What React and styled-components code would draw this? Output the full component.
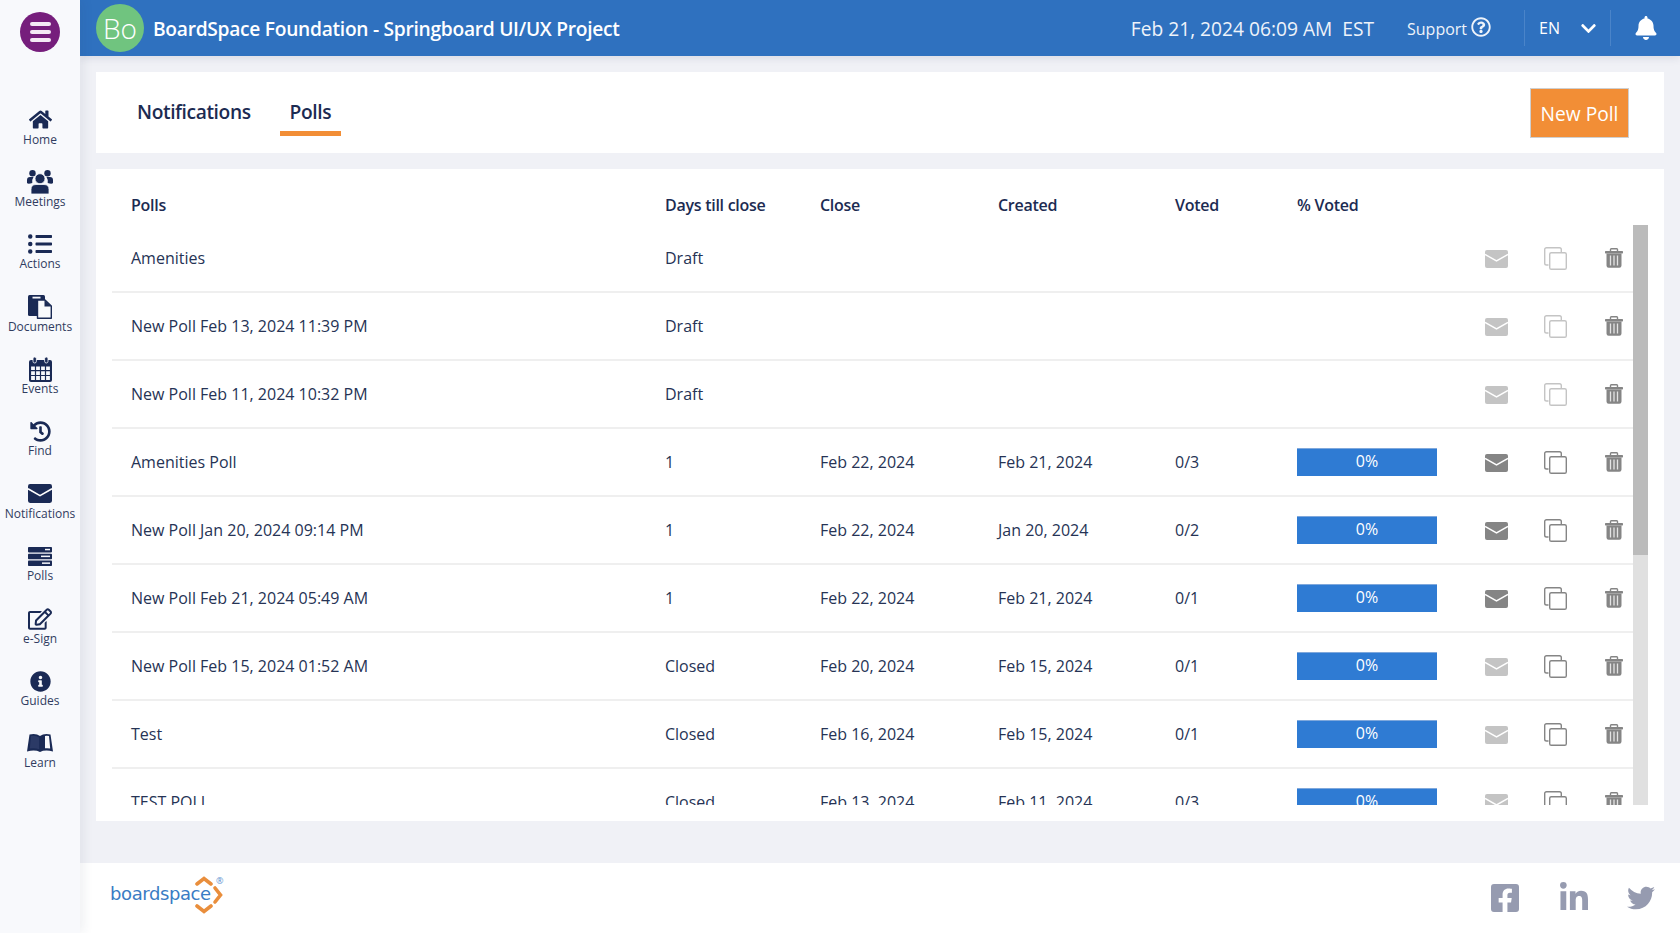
import React from "react";
import styled, { createGlobalStyle } from "styled-components";
import {
  FaHome, FaListUl, FaHistory, FaRegEdit, FaInfoCircle,
  FaBell, FaChevronDown, FaRegQuestionCircle, FaFacebookSquare, FaLinkedinIn, FaTwitter,
} from "react-icons/fa";

const Global = createGlobalStyle`
  html, body { margin: 0; padding: 0; height: 100%; overflow: hidden; }
  body { font-family: "Open Sans", "Noto Sans", sans-serif; color: #1c2b52; }
  * { box-sizing: border-box; }
`;

const Shell = styled.div`display: flex; width: 100%; height: 100vh; background: #f0f1f6;`;
const Sidebar = styled.nav`
  width: 80px; flex: none; background: #f8f9fc; position: relative; z-index: 2;
  box-shadow: 4px 0 10px rgba(40, 50, 90, 0.07);
  display: flex; flex-direction: column; align-items: center; padding-top: 12px;
`;
const MenuButton = styled.button`
  width: 40px; height: 40px; border-radius: 50%; border: 0; padding: 0; margin-bottom: 55.5px;
  background: #761e7c; display: flex; flex-direction: column; justify-content: center; align-items: center; gap: 4px;
`;
const MenuBar = styled.span`width: 21px; height: 4px; border-radius: 2px; background: #f4e9f5;`;
const NavItem = styled.a`
  height: 62.4px; width: 80px; flex: none; display: flex; flex-direction: column; align-items: center;
  font-size: 12px; line-height: 16px; color: #303c60;
`;
const NavIcon = styled.span`
  height: 24px; display: flex; align-items: center; justify-content: center; color: #1a2a55;
`;

const Main = styled.div`flex: 1; min-width: 0; display: flex; flex-direction: column;`;
const Header = styled.header`
  height: 56px; flex: none; background: #2f71bf; color: #fff; display: flex; align-items: center;
  padding-left: 16px; box-shadow: 0 2px 8px rgba(40, 50, 90, 0.12); position: relative; z-index: 1;
`;
const Avatar = styled.div`
  width: 48px; height: 48px; border-radius: 50%; background: #70c47f; color: #fff; font-weight: 300; font-size: 28px;
  display: flex; align-items: center; justify-content: center; flex: none;
`;
const Title = styled.div`margin-left: 9px; font-size: 19.2px; font-weight: 600; letter-spacing: -0.28px; white-space: nowrap;`;
const DateText = styled.div`margin-left: auto; font-size: 19.2px; font-weight: 400; white-space: pre; color: #eef3fa;`;
const Support = styled.div`
  margin-left: 33px; width: 117px; height: 36px; display: flex; align-items: center; gap: 4px; font-size: 16px; color: #eef3fa;
`;
const SupportLabel = styled.span`padding-top: 2px;`;
const SupportIcon = styled.span`display: flex; margin-top: -3px;`;
const Lang = styled.div`
  width: 87px; height: 36px; border-left: 1px solid #4a84c9; border-right: 1px solid #4a84c9;
  display: flex; align-items: center; padding-left: 14px; font-size: 16px; font-weight: 500;
`;
const LangChevron = styled.span`margin-left: 20px; display: flex;`;
const BellBox = styled.div`width: 69px; display: flex; justify-content: flex-start; padding-left: 23px;`;

const Content = styled.main`flex: 1; min-height: 0; padding: 16px; display: flex; flex-direction: column; gap: 16px;`;
const TabsCard = styled.section`
  height: 81px; flex: none; background: #fff; display: flex; align-items: flex-start;
  padding: 16px 35px 0 31px;
`;
const Tab = styled.div`
  height: 48px; padding: 0 10px; margin-right: 19px; font-size: 19.2px; line-height: 47px; font-weight: 600;
  letter-spacing: -0.4px; color: #1c2b52;
  border-bottom: 5px solid ${(p) => (p.$active ? "#f28e36" : "transparent")};
`;
const NewPoll = styled.button`
  margin-left: auto; width: 99px; height: 50px; background: #f28e36; border: 1px solid #cfcfcf; color: #fff;
  font: 500 19.2px "Open Sans", sans-serif; padding: 0;
`;
const TableCard = styled.section`
  height: 652px; flex: none; background: #fff; padding: 0 16px 16px; display: flex; flex-direction: column;
`;
const Cols = `534px 155px 178px 177px 122px 188px 59px 61px 28px`;
const HeadRow = styled.div`
  display: grid; grid-template-columns: ${Cols}; height: 56px; padding: 16px 0 0 19px; align-items: center;
  font-size: 16px; font-weight: 600; letter-spacing: -0.27px; line-height: 38px; flex: none;
`;
const ScrollArea = styled.div`display: flex; height: 580px; flex: none;`;
const Rows = styled.div`flex: 1; min-width: 0; overflow: hidden;`;
const ScrollTrack = styled.div`width: 15px; flex: none; background: #e0e0e0;`;
const ScrollThumb = styled.div`height: 330px; background: #bbbbbb;`;
const Row = styled.div`
  display: grid; grid-template-columns: ${Cols}; height: 68px; padding-left: 19px; align-items: center;
  border-bottom: 2px solid #efefef; font-size: 16px; color: #263355;
`;
const Bar = styled.div`
  width: 140px; height: 28px; background: #2f7bd3; border-top: 1px solid #7fa8dc; color: #fff;
  font-size: 16px; line-height: 24px; text-align: center;
`;
const Action = styled.span`display: flex; align-items: center; height: 24px; padding-top: ${(p) => p.$drop || 0}px; color: ${(p) => p.$color};`;

const Footer = styled.footer`
  height: 70px; flex: none; background: #fff; display: flex; align-items: center; padding: 0 25px 0 30px; color: #969bb0;
`;
const Logo = styled.div`position: relative; width: 115px; height: 40px; display: flex; align-items: center; margin-top: -10px;`;
const LogoText = styled.span`font: 400 18px "DejaVu Sans", sans-serif; letter-spacing: -0.4px; color: #3a7cc4;`;
const LogoMark = styled.svg`position: absolute; left: 85px; top: 2px;`;
const LogoReg = styled.span`position: absolute; left: 106px; top: 1px; font-size: 9px; color: #5a92d0;`;
const Socials = styled.div`margin-left: auto; display: flex; gap: 37px; align-items: center; margin-top: -1px;`;

const Envelope = ({ w = 23, h = 18, color = "currentColor" }) => (
  <svg width={w} height={h} viewBox="0 0 23 18">
    <rect width="23" height="18" rx="2" fill={color} />
    <path d="M0 4.5 L11.5 11 L23 4.5" fill="none" stroke="#fff" strokeWidth="1.5" />
  </svg>
);
const CopyIcon = () => (
  <svg width="23" height="23" viewBox="0 0 23 23" fill="none" stroke="currentColor" strokeWidth="1.4">
    <path d="M4.5 18 H2.5 a1.8 1.8 0 0 1 -1.8 -1.8 V2.5 a1.8 1.8 0 0 1 1.8 -1.8 H15.5 a1.8 1.8 0 0 1 1.8 1.8 V5" />
    <rect x="5.7" y="5.7" width="16.6" height="16.6" rx="1.6" />
  </svg>
);
const TrashIcon = () => (
  <svg width="18" height="20" viewBox="0 0 18 20">
    <path d="M5.5 3.2 V1.5 a.8 .8 0 0 1 .8 -.8 h5.4 a.8 .8 0 0 1 .8 .8 V3.2" fill="none" stroke="currentColor" strokeWidth="1.4" />
    <rect y="3" width="18" height="2.4" rx=".6" fill="currentColor" />
    <path d="M1.5 5.4 H16.5 V17.6 a2.2 2.2 0 0 1 -2.2 2.2 H3.7 a2.2 2.2 0 0 1 -2.2 -2.2 Z" fill="currentColor" />
    <path d="M5.5 7.5 V17.5 M9 7.5 V17.5 M12.5 7.5 V17.5" stroke="#e4e4e4" strokeWidth="1.3" />
  </svg>
);
const UsersIcon = () => (
  <svg width="26" height="24" viewBox="0 0 26 24" fill="#1a2a55">
    <circle cx="5.5" cy="3.2" r="3.2" />
    <circle cx="20.5" cy="3.2" r="3.2" />
    <path d="M0 13 V10 Q0 7 3 7 H6.5 Q5 9 5.3 13 Q1 14.5 0 13 Z" />
    <path d="M26 13 V10 Q26 7 23 7 H19.5 Q21 9 20.7 13 Q25 14.5 26 13 Z" />
    <circle cx="13" cy="8.7" r="5" fill="#1a2a55" stroke="#f8f9fc" strokeWidth="0.8" />
    <path d="M4 24 V19.5 Q4 14.5 9 14.5 H17 Q22 14.5 22 19.5 V24 Z" stroke="#f8f9fc" strokeWidth="0.8" />
  </svg>
);
const CalendarIcon = () => (
  <svg width="23" height="25" viewBox="0 0 23 25">
    <rect x="0" y="3" width="23" height="22" rx="2" fill="#1a2a55" />
    <rect x="4" y="0" width="3.4" height="6" rx="1.7" fill="#1a2a55" stroke="#f8f9fc" strokeWidth=".8" />
    <rect x="15.6" y="0" width="3.4" height="6" rx="1.7" fill="#1a2a55" stroke="#f8f9fc" strokeWidth=".8" />
    <path d="M1.5 9 H21.5 V23.5 H1.5 Z M1.5 13.7 H21.5 M1.5 18.5 H21.5 M6.5 9 V23.5 M11.5 9 V23.5 M16.5 9 V23.5" fill="#f8f9fc" stroke="#1a2a55" strokeWidth="1.2" />
  </svg>
);
const DocsIcon = () => (
  <svg width="24" height="25" viewBox="0 0 24 25">
    <rect x="0" y="1" width="17" height="21" rx="1.5" fill="#1a2a55" />
    <rect x="4.5" y="2.7" width="8" height="1.8" fill="#f8f9fc" />
    <path d="M9.5 6 H17 L23.3 12 V24.3 H9.5 Z" fill="#f8f9fc" stroke="#1a2a55" strokeWidth="1.4" strokeLinejoin="round" />
    <path d="M16.5 6 V12.5 H23.3 Z" fill="#1a2a55" />
  </svg>
);
const PollsIcon = () => (
  <svg width="24" height="19" viewBox="0 0 24 19">
    <rect width="24" height="5.4" rx=".8" fill="#1a2a55" />
    <rect y="6.8" width="24" height="5.4" rx=".8" fill="#1a2a55" />
    <rect y="13.6" width="24" height="5.4" rx=".8" fill="#1a2a55" />
    <rect x="17" y="1.8" width="5" height="1.5" fill="#f8f9fc" />
    <rect x="13" y="8.6" width="9" height="1.5" fill="#f8f9fc" />
    <rect x="14" y="15.4" width="8" height="1.5" fill="#f8f9fc" />
  </svg>
);
const BookIcon = () => (
  <svg width="28" height="20" viewBox="0 0 28 20">
    <path d="M1 18.5 L3.5 1.5 Q10 0 14 3 Q18 0 24.5 1.5 L27 18.5 Q19 16.5 14 19 Q9 16.5 1 18.5 Z" fill="#1a2a55" />
    <path d="M5 3 Q10 2 13.2 4.5 V16.3 Q9 14.8 3.8 15.5 Z" fill="#2b3a66" />
    <path d="M23 3 Q20.5 2.5 19 3 V15.3 Q22 15 24.2 15.5 Z" fill="#f8f9fc" />
  </svg>
);

const navItems = [
  ["Home", <FaHome size={23} />],
  ["Meetings", <UsersIcon />],
  ["Actions", <FaListUl size={24} />],
  ["Documents", <DocsIcon />],
  ["Events", <CalendarIcon />],
  ["Find", <FaHistory size={21} />],
  ["Notifications", <Envelope w={24} h={19} color="#1a2a55" />],
  ["Polls", <PollsIcon />],
  ["e-Sign", <FaRegEdit size={24} />],
  ["Guides", <FaInfoCircle size={21} />],
  ["Learn", <BookIcon />],
];

const rows = [
  ["Amenities", "Draft", "", "", "", false, "light", "light"],
  ["New Poll Feb 13, 2024 11:39 PM", "Draft", "", "", "", false, "light", "light"],
  ["New Poll Feb 11, 2024 10:32 PM", "Draft", "", "", "", false, "light", "light"],
  ["Amenities Poll", "1", "Feb 22, 2024", "Feb 21, 2024", "0/3", true, "dark", "dark"],
  ["New Poll Jan 20, 2024 09:14 PM", "1", "Feb 22, 2024", "Jan 20, 2024", "0/2", true, "dark", "dark"],
  ["New Poll Feb 21, 2024 05:49 AM", "1", "Feb 22, 2024", "Feb 21, 2024", "0/1", true, "dark", "dark"],
  ["New Poll Feb 15, 2024 01:52 AM", "Closed", "Feb 20, 2024", "Feb 15, 2024", "0/1", true, "light", "dark"],
  ["Test", "Closed", "Feb 16, 2024", "Feb 15, 2024", "0/1", true, "light", "dark"],
  ["TEST POLL", "Closed", "Feb 13, 2024", "Feb 11, 2024", "0/3", true, "light", "dark"],
];
const tone = { light: "#c4c4c4", dark: "#858585" };

export default function App() {
  return (
    <Shell>
      <Global />
      <Sidebar>
        <MenuButton aria-label="Menu"><MenuBar /><MenuBar /><MenuBar /></MenuButton>
        {navItems.map(([label, icon]) => (
          <NavItem key={label}>
            <NavIcon>{icon}</NavIcon>
            {label}
          </NavItem>
        ))}
      </Sidebar>
      <Main>
        <Header>
          <Avatar>Bo</Avatar>
          <Title>BoardSpace Foundation - Springboard UI/UX Project</Title>
          <DateText>Feb 21, 2024 06:09 AM  EST</DateText>
          <Support><SupportLabel>Support</SupportLabel><SupportIcon><FaRegQuestionCircle size={20} /></SupportIcon></Support>
          <Lang>EN<LangChevron><FaChevronDown size={17} /></LangChevron></Lang>
          <BellBox><FaBell size={24} /></BellBox>
        </Header>
        <Content>
          <TabsCard>
            <Tab>Notifications</Tab>
            <Tab $active>Polls</Tab>
            <NewPoll>New Poll</NewPoll>
          </TabsCard>
          <TableCard>
            <HeadRow>
              <span>Polls</span><span>Days till close</span><span>Close</span><span>Created</span><span>Voted</span><span>% Voted</span>
            </HeadRow>
            <ScrollArea>
              <Rows>
                {rows.map(([name, days, close, created, voted, bar, env, copy], i) => (
                  <Row key={i}>
                    <span>{name}</span><span>{days}</span><span>{close}</span><span>{created}</span><span>{voted}</span>
                    <span>{bar && <Bar>0%</Bar>}</span>
                    <Action $color={tone[env]} $drop={1}><Envelope /></Action>
                    <Action $color={tone[copy]} $drop={1}><CopyIcon /></Action>
                    <Action $color={tone.dark}><TrashIcon /></Action>
                  </Row>
                ))}
              </Rows>
              <ScrollTrack><ScrollThumb /></ScrollTrack>
            </ScrollArea>
          </TableCard>
        </Content>
        <Footer>
          <Logo>
            <LogoText>boardspace</LogoText>
            <LogoMark width="30" height="40" viewBox="0 0 30 40" fill="none" stroke="#e98e3c" strokeWidth="3.6" strokeLinecap="round">
              <path d="M2 9 L9 3.5 L16 9" />
              <path d="M2 31 L9 36.5 L16 31" />
              <path d="M20 13 L25.5 20 L20 27" />
            </LogoMark>
            <LogoReg>®</LogoReg>
          </Logo>
          <Socials>
            <FaFacebookSquare size={32} />
            <FaLinkedinIn size={32} />
            <FaTwitter size={28} />
          </Socials>
        </Footer>
      </Main>
    </Shell>
  );
}
